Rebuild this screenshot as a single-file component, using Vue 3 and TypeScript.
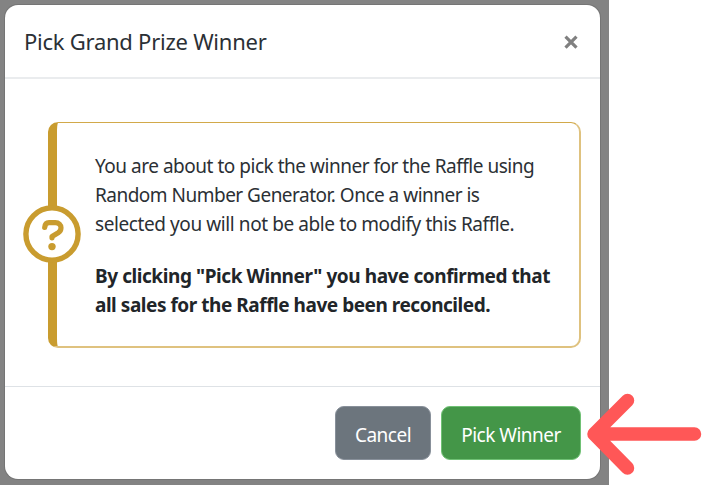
<script setup lang="ts">
import { ref } from 'vue'

const open = ref<boolean>(true)
const notice: string[] = [
  'You are about to pick the winner for the Raffle using',
  'Random Number Generator. Once a winner is',
  'selected you will not be able to modify this Raffle.',
]
const confirmation: string[] = [
  'By clicking "Pick Winner" you have confirmed that',
  'all sales for the Raffle have been reconciled.',
]
const close = (): void => {
  open.value = false
}
</script>

<template>
  <main class="page">
    <div class="backdrop">
      <section v-if="open" class="modal" role="dialog" aria-labelledby="title">
        <header class="header">
          <h1 id="title" class="title">Pick Grand Prize Winner</h1>
          <button class="close" aria-label="Close" @click="close">
            <svg width="16" height="16" viewBox="0 0 16 16">
              <path d="M2.500 2.600 13.500 13.600M13.500 2.600 2.500 13.600" />
            </svg>
          </button>
        </header>
        <div class="body">
          <div class="callout">
            <svg class="question" width="58" height="58" viewBox="0 0 58 58">
              <circle class="ring" cx="29" cy="29" r="26.1" />
              <path class="hook" d="M21.7 22.4C22 19.4 23.500 17.600 26 17.600H32.400C35.700 17.600 38 19.800 38 22.800C38 25 37 26.700 35.200 27.800L29 31.400V32.800" />
              <circle class="dot" cx="29" cy="41.6" r="3.7" />
            </svg>
            <p class="text"><span v-for="(line, i) in notice" :key="line" :class="['line', 'n' + i]">{{ line }}</span></p>
            <p class="text strong"><span v-for="(line, i) in confirmation" :key="line" :class="['line', 'c' + i]">{{ line }}</span></p>
          </div>
        </div>
        <footer class="footer">
          <button class="btn cancel" @click="close"><span>Cancel</span></button>
          <button class="btn pick"><span>Pick Winner</span></button>
        </footer>
      </section>
    </div>
    <svg class="arrow" width="124" height="90" viewBox="0 0 124 90">
      <path d="M108.500 45H8M41.500 11.500 8 45 41.500 79" />
    </svg>
  </main>
</template>

<style>
body {
  margin: 0;
  background: #fff;
}
</style>

<style scoped>
* {
  box-sizing: border-box;
}
.page {
  position: relative;
  width: 710px;
  height: 485px;
  overflow: hidden;
  font-family: "Noto Sans", "Open Sans", sans-serif;
  color: #2b3035;
}
.backdrop {
  width: 609px;
  height: 485px;
  padding: 5px 9px 6px 5px;
  background: #838383;
}
.modal {
  display: flex;
  flex-direction: column;
  height: 474px;
  background: #fff;
  border-radius: 13px;
  box-shadow: 0 0 0 1px #757575;
}
.header {
  display: flex;
  align-items: center;
  justify-content: space-between;
  height: 74px;
  padding: 0 21px 0 19px;
  border-bottom: 2px solid #eaecee;
}
.title {
  margin: 0 0 1px;
  font-size: 22px;
  line-height: 30px;
  font-weight: 400;
  letter-spacing: -0.25px;
  white-space: nowrap;
}
.close {
  display: flex;
  margin-top: 2px;
  padding: 0;
  border: 0;
  background: none;
}
.close path {
  fill: none;
  stroke: #808080;
  stroke-width: 3.2;
}
.body {
  height: 307px;
  padding: 43px 19px 0 43px;
}
.callout {
  position: relative;
  height: 226px;
  padding: 29px 0 0 38px;
  border: 1px solid #d2a94a;
  border-right: 2px solid #dfc27f;
  border-bottom: 2px solid #dfc27f;
  border-left: 9px solid #c99c2f;
  border-radius: 10px;
}
.question {
  position: absolute;
  left: -34px;
  top: 82px;
}
.ring {
  fill: #fff;
  stroke: #c99c2f;
  stroke-width: 5.4;
}
.hook {
  fill: none;
  stroke: #c99c2f;
  stroke-width: 5.2;
  stroke-linecap: round;
  stroke-linejoin: round;
}
.dot {
  fill: #c99c2f;
}
.text {
  margin: 0 0 23px;
  font-size: 19px;
  line-height: 29px;
}
.strong {
  font-weight: 700;
  color: #212529;
}
.line {
  display: block;
  width: max-content;
  white-space: nowrap;
}
.n0 {
  letter-spacing: -0.48px;
}
.n1 {
  letter-spacing: -0.51px;
}
.n2 {
  letter-spacing: -0.41px;
}
.c0 {
  letter-spacing: -0.43px;
}
.c1 {
  letter-spacing: -0.46px;
}
.footer {
  display: flex;
  justify-content: flex-end;
  gap: 10px;
  flex: 1;
  padding: 19px 19px 0 0;
  border-top: 1px solid #dee2e6;
}
.btn {
  height: 54px;
  padding: 4px 0 0;
  border-radius: 9px;
  font-family: inherit;
  font-size: 19px;
  line-height: 29px;
  color: #fff;
  letter-spacing: -0.52px;
  white-space: nowrap;
}
.cancel {
  width: 96px;
  background: #6c757d;
  border: 1px solid #88909a;
}
.pick {
  width: 140px;
  background: #449648;
  border: 1px solid #70c175;
}
.arrow {
  position: absolute;
  left: 586px;
  top: 389px;
}
.arrow path {
  fill: none;
  stroke: #ff5757;
  stroke-width: 13.5;
  stroke-linecap: round;
  stroke-linejoin: round;
}
</style>
